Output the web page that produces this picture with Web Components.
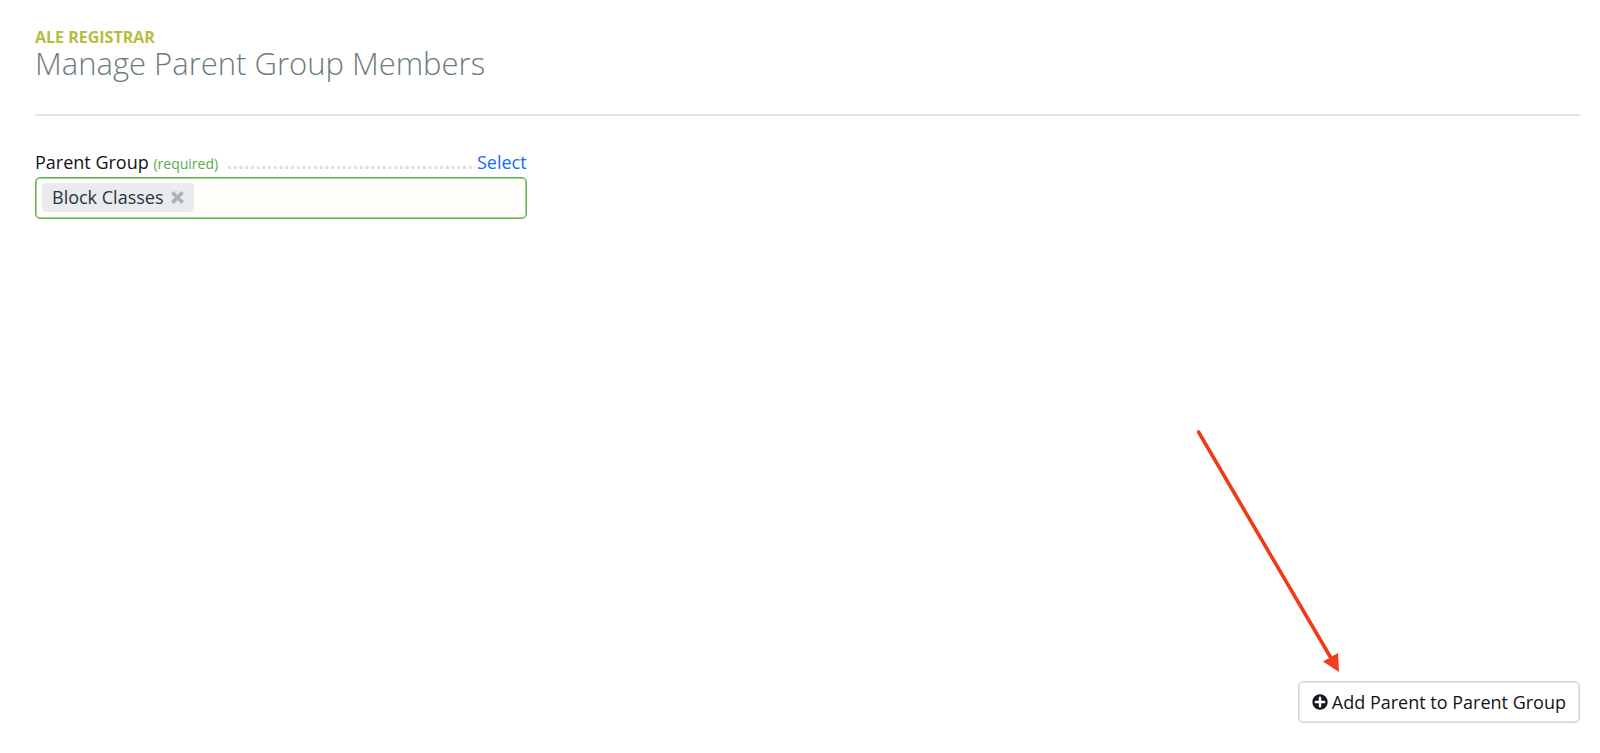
<!DOCTYPE html>
<html lang="en">
<head>
<meta charset="utf-8">
<meta name="viewport" content="width=device-width, initial-scale=1">
<title>Manage Parent Group Members</title>
<style>
  body {
    margin: 0;
    background: #ffffff;
    color: #111418;
    font-family: "Open Sans", "Noto Sans", sans-serif;
    font-size: 18px;
    line-height: 24px;
  }
</style>
</head>
<body>
<registrar-page>
  <page-heading slot="header" section="ALE REGISTRAR">Manage Parent Group Members</page-heading>
  <token-field label="Parent Group" hint="(required)" action="Select">
    <token-chip>Block Classes</token-chip>
  </token-field>
  <add-button slot="footer">Add Parent to Parent Group</add-button>
  <pointer-arrow slot="overlay"></pointer-arrow>
</registrar-page>

<script>
'use strict';

class RegistrarPage extends HTMLElement {
  constructor() {
    super();
    this.attachShadow({ mode: 'open' });
    this.shadowRoot.innerHTML = `
      <style>
        :host {
          display: flex;
          flex-direction: column;
          position: relative;
          box-sizing: border-box;
          min-height: 100vh;
          padding: 27px 20px 30px 35px;
        }
        main {
          display: grid;
          grid-template-columns: repeat(3, 1fr);
          gap: 35px;
          flex: 1;
          align-content: start;
          padding-top: 34px;
        }
        footer {
          display: flex;
          justify-content: flex-end;
        }
      </style>
      <slot name="header"></slot>
      <main><slot></slot></main>
      <footer><slot name="footer"></slot></footer>
      <slot name="overlay"></slot>
    `;
  }
}

class PageHeading extends HTMLElement {
  constructor() {
    super();
    this.attachShadow({ mode: 'open' });
    this.shadowRoot.innerHTML = `
      <style>
        :host {
          display: block;
          border-bottom: 2px solid #e1e3e3;
          padding-bottom: 35px;
        }
        p {
          margin: 0;
          color: #b5bd3c;
          font-size: 16px;
          font-weight: 700;
          line-height: 20px;
        }
        h1 {
          margin: 0;
          color: #6c7c7d;
          font-size: 31px;
          font-weight: 300;
          line-height: 32px;
        }
      </style>
      <header>
        <p></p>
        <h1><slot></slot></h1>
      </header>
    `;
  }
  connectedCallback() {
    this.shadowRoot.querySelector('p').textContent = this.getAttribute('section');
  }
}

class TokenField extends HTMLElement {
  constructor() {
    super();
    this.attachShadow({ mode: 'open' });
    this.shadowRoot.innerHTML = `
      <style>
        :host {
          display: block;
        }
        .caption {
          display: flex;
          align-items: baseline;
          padding-bottom: 3px;
          line-height: 24px;
        }
        label {
          white-space: nowrap;
        }
        small {
          color: #5aaa4c;
          font-size: 14px;
          line-height: 20px;
        }
        .leader {
          flex: 1;
          align-self: flex-end;
          height: 3px;
          margin: 0 2px 5px 10px;
          background: linear-gradient(90deg, #dcdee4 50%, transparent 50%) 0 0 / calc(100% / 43) 3px;
        }
        a {
          color: #0d6efd;
          text-decoration: none;
        }
        .box {
          display: flex;
          align-items: flex-start;
          box-sizing: border-box;
          min-height: 42px;
          padding: 5px 6px 4px;
          border: 1px solid #5fb04c;
          border-radius: 5px;
          background: #fffef9;
          box-shadow: inset 0 0 0 1px #a9d39c;
        }
        input {
          flex: 1;
          min-width: 0;
          border: 0;
          padding: 0 8px;
          outline: 0;
          background: none;
          font: inherit;
        }
      </style>
      <div class="caption">
        <label for="entry"><span></span> <small></small></label>
        <div class="leader"></div>
        <a href="#select"></a>
      </div>
      <div class="box">
        <slot></slot>
        <input id="entry" type="text" autocomplete="off">
      </div>
    `;
  }
  connectedCallback() {
    this.shadowRoot.querySelector('span').textContent = this.getAttribute('label');
    this.shadowRoot.querySelector('small').textContent = this.getAttribute('hint');
    this.shadowRoot.querySelector('a').textContent = this.getAttribute('action');
  }
}

class TokenChip extends HTMLElement {
  constructor() {
    super();
    this.attachShadow({ mode: 'open' });
    this.shadowRoot.innerHTML = `
      <style>
        :host {
          display: inline-flex;
          align-items: center;
          gap: 8px;
          box-sizing: border-box;
          height: 29px;
          padding: 0 10px;
          border-radius: 4px;
          background: #e9ebef;
          color: #2b333b;
          line-height: 22px;
          white-space: nowrap;
        }
        span {
          padding-bottom: 2px;
        }
        button {
          display: flex;
          padding: 0;
          border: 0;
          background: none;
          color: #adb3ba;
          cursor: pointer;
        }
      </style>
      <span><slot></slot></span>
      <button type="button" aria-label="Remove">
        <svg width="13" height="13" viewBox="0 0 13 13" aria-hidden="true">
          <path d="M2.700 2.700l7.600 7.600M10.300 2.700l-7.600 7.600" stroke="currentColor" stroke-width="3.700" stroke-linecap="square"/>
        </svg>
      </button>
    `;
    this.shadowRoot.querySelector('button').addEventListener('click', () => this.remove());
  }
}

class AddButton extends HTMLElement {
  constructor() {
    super();
    this.attachShadow({ mode: 'open' });
    this.shadowRoot.innerHTML = `
      <style>
        :host {
          display: block;
        }
        button {
          display: flex;
          align-items: center;
          gap: 4px;
          height: 42px;
          padding: 0 13px;
          border: 1px solid #ced4da;
          border-radius: 5px;
          background: #ffffff;
          box-shadow: inset 0 0 0 1px #e4e7eb;
          color: #111418;
          font: inherit;
          white-space: nowrap;
          cursor: pointer;
        }
      </style>
      <button type="button">
        <svg width="16" height="16" viewBox="0 0 16 16" aria-hidden="true">
          <circle cx="8" cy="8" r="7.7" fill="#16191f"/>
          <path d="M8 3.8v8.4M3.8 8h8.4" stroke="#fff" stroke-width="2.4" stroke-linecap="round"/>
        </svg>
        <span><slot></slot></span>
      </button>
    `;
  }
}

// Callout drawn over the page, anchored to the button in the bottom right corner
class PointerArrow extends HTMLElement {
  constructor() {
    super();
    this.attachShadow({ mode: 'open' });
    this.shadowRoot.innerHTML = `
      <style>
        :host {
          position: absolute;
          right: 260px;
          bottom: 80px;
          pointer-events: none;
        }
        svg {
          display: block;
        }
      </style>
      <svg width="143" height="243" viewBox="0 0 143 243" aria-hidden="true">
        <path d="M1.500 2L134 228" stroke="#f03a17" stroke-width="3.6" stroke-linecap="round"/>
        <path d="M142 242L126 231.500L141 223Z" fill="#f03c20"/>
      </svg>
    `;
  }
}

customElements.define('registrar-page', RegistrarPage);
customElements.define('page-heading', PageHeading);
customElements.define('token-field', TokenField);
customElements.define('token-chip', TokenChip);
customElements.define('add-button', AddButton);
customElements.define('pointer-arrow', PointerArrow);
</script>
</body>
</html>
